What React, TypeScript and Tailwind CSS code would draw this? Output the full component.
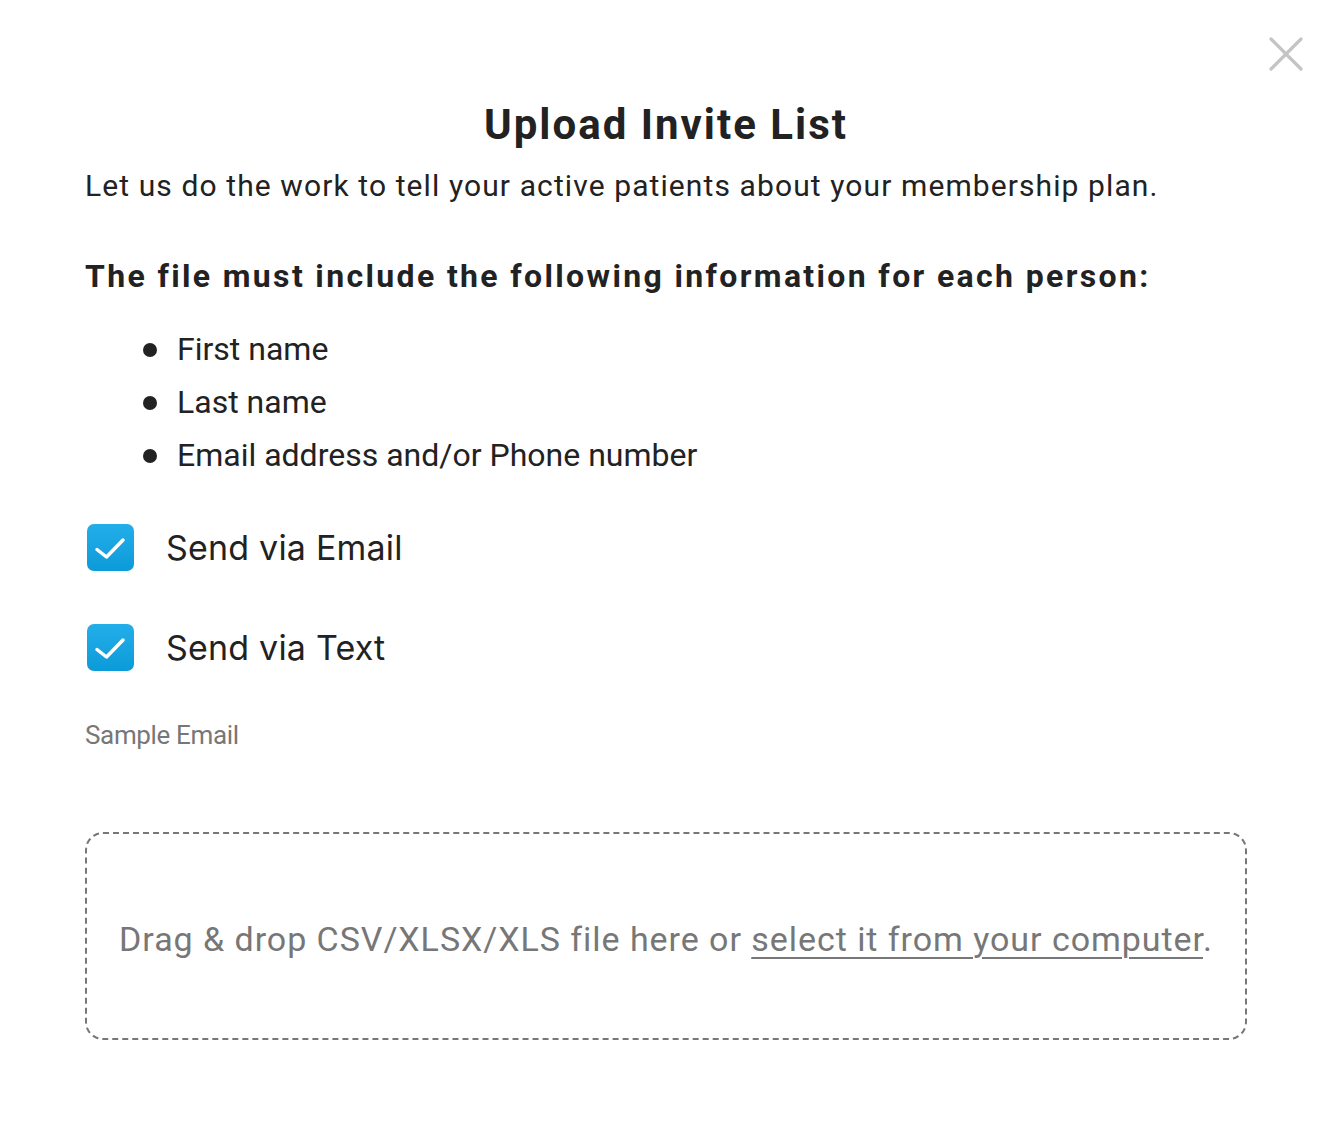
import React, { useState } from "react";

const ink = "text-[#222222]";

function CheckRow({ label, checked, onToggle }: { label: string; checked: boolean; onToggle: () => void }) {
  return (
    <label className="flex h-[48px] cursor-pointer items-center">
      <button
        type="button"
        onClick={onToggle}
        className={`h-[47px] w-[47px] shrink-0 rounded-[7px] ${
          checked ? "bg-gradient-to-b from-[#22aee9] to-[#0a9bd9]" : "border-2 border-[#bbbbbb] bg-white"
        }`}
      >
        {checked && (
          <svg width="47" height="47" viewBox="0 0 47 47" fill="none" className="block">
            <path d="M10 25.5l9.5 7.5L36 16" stroke="white" strokeWidth="3.5" strokeLinecap="round" strokeLinejoin="round" />
          </svg>
        )}
      </button>
      <span className={`ml-[32px] font-['Inter',sans-serif] text-[34px] tracking-[0.2px] ${ink}`}>{label}</span>
    </label>
  );
}

export default function App() {
  const [email, setEmail] = useState(true);
  const [text, setText] = useState(true);

  return (
    <div className="relative h-[1130px] w-[1340px] bg-white pl-[85px] pr-[93px] pt-[100px] font-['Roboto',sans-serif]">
      <button className="absolute right-[37px] top-[37px] h-[34px] w-[34px]" aria-label="Close">
        <svg viewBox="0 0 34 34" width="34" height="34" fill="none">
          <path d="M2 2l30 30M32 2L2 32" stroke="#c4c4c4" strokeWidth="3.2" strokeLinecap="round" />
        </svg>
      </button>

      <h1 className={`text-center text-[42px] font-bold leading-[50px] tracking-[2px] ${ink}`}>Upload Invite List</h1>
      <p className={`mt-[16px] text-[30px] leading-[40px] tracking-[1.1px] ${ink}`}>
        Let us do the work to tell your active patients about your membership plan.
      </p>

      <p className={`mt-[50px] text-[32px] font-bold leading-[40px] tracking-[2.35px] ${ink}`}>
        The file must include the following information for each person:
      </p>

      <ul className={`mt-[27px] pl-[58px] text-[32px] leading-[53px] tracking-[0px] ${ink}`}>
        {["First name", "Last name", "Email address and/or Phone number"].map((item) => (
          <li key={item} className="flex items-center">
            <span className="mr-[20px] h-[14px] w-[14px] rounded-full bg-[#222222]" />
            {item}
          </li>
        ))}
      </ul>

      <div className="mt-[41px] flex flex-col gap-[52px] pl-[2px]">
        <CheckRow label="Send via Email" checked={email} onToggle={() => setEmail(!email)} />
        <CheckRow label="Send via Text" checked={text} onToggle={() => setText(!text)} />
      </div>

      <div className="mt-[49px] text-[26px] leading-[30px] tracking-[-0.35px] text-[#777777]">Sample Email</div>

      <div className="mt-[82px] flex h-[208px] items-center justify-center rounded-[18px] border-2 border-dashed border-[#777777] pt-[6px]">
        <p className="text-[34px] tracking-[0.95px] text-[#777777]">
          Drag &amp; drop CSV/XLSX/XLS file here or{" "}
          <a href="#" className="underline decoration-2 underline-offset-[6px]">
            select it from your computer
          </a>
          .
        </p>
      </div>
    </div>
  );
}
